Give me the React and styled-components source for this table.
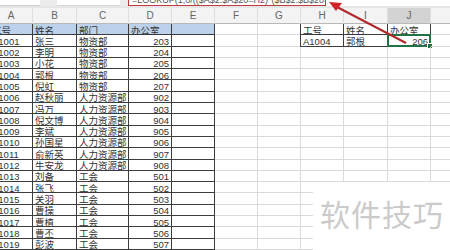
import React from "react";
import styled, { createGlobalStyle } from "styled-components";

const Global = createGlobalStyle`
  html, body {
    margin: 0;
    padding: 0;
    width: 450px;
    height: 250px;
    overflow: hidden;
    background: #ffffff;
    font-family: "Liberation Sans", "Noto Sans CJK SC", sans-serif;
  }
  * { box-sizing: border-box; }
`;

const Page = styled.div`
  position: relative;
  width: 450px;
  height: 250px;
  overflow: hidden;
  background: #fff;
`;

const TopBar = styled.div`
  display: flex;
  height: 6px;
  background: #ececec;
  overflow: hidden;
`;

const NameBox = styled.div`
  width: 40px;
  background: #fff;
  border-bottom: 1px solid #cfcfcf;
`;

const FxBox = styled.div`
  width: 63px;
  margin-left: 17px;
  background: #fff;
  border-bottom: 1px solid #d6d6d6;
`;

const FormulaBox = styled.div`
  width: 198px;
  margin-left: 8px;
  background: #fff;
  border: 1px solid #c4383c;
  border-top: none;
  overflow: hidden;
  font-size: 9px;
  line-height: 10px;
  color: #555;
  white-space: nowrap;
  padding-left: 3px;
`;

const FormulaText = styled.div`
  margin-top: -5px;
`;

const FormulaRest = styled.div`
  flex: 1;
  background: #fff;
`;

const Gap = styled.div`
  height: 2px;
  background: #e6e6e6;
`;

const Sheet = styled.div`
  display: grid;
  grid-template-columns: 43px 44px 52px 43px 43px 43px 43px 43px 44px 43px 60px;
  grid-template-rows: 16px;
  grid-auto-rows: 11.3px;
  margin-left: -10px;
  width: 501px;
`;

const ColHead = styled.div`
  display: flex;
  align-items: flex-start;
  justify-content: center;
  padding-top: 2px;
  font-size: 10px;
  line-height: 11px;
  color: #666;
  background: ${(p) => (p.$active ? "#d3d3d3" : "#f3f3f3")};
  border-right: 1px solid #dedede;
  border-bottom: 1px solid #b8b8b8;
`;

const Cell = styled.div`
  position: relative;
  font-size: 9.5px;
  line-height: 11px;
  padding: 0.5px 2px 0;
  color: #333;
  white-space: nowrap;
  text-align: ${(p) => (p.$right ? "right" : "left")};
  background: ${(p) => (p.$head ? "#bcd2ea" : "transparent")};
  border-right: 1px solid ${(p) => (p.$table ? "#3c3c3c" : "#dadada")};
  border-bottom: 1px solid ${(p) => (p.$table ? "#3c3c3c" : "#dadada")};
  border-left: ${(p) => (p.$edge ? "1px solid #3c3c3c" : "none")};
  margin-left: ${(p) => (p.$edge ? "-1px" : "0")};
`;

const Selection = styled.div`
  position: absolute;
  left: -1px;
  top: -1px;
  right: -1px;
  bottom: -1px;
  border: 2px solid #217346;
  pointer-events: none;
  &::after {
    content: "";
    position: absolute;
    right: -4px;
    bottom: -4px;
    width: 4px;
    height: 4px;
    background: #217346;
    border: 1px solid #fff;
  }
`;

const Watermark = styled.div`
  position: absolute;
  left: 313px;
  top: 182px;
  right: 0;
  bottom: 0;
  background: #fff;
  display: flex;
  align-items: flex-start;
  padding: 14px 0 0 7px;
  font-family: "Noto Sans CJK SC", sans-serif;
  font-size: 30px;
  line-height: 34px;
  letter-spacing: 1px;
  color: #cbcbcb;
`;

const Arrow = styled.svg`
  position: absolute;
  left: 0;
  top: 0;
  pointer-events: none;
`;

const cols = ["A", "B", "C", "D", "E", "F", "G", "H", "I", "J", "K"];

const rows = [
  ["张三", "物资部", 203],
  ["李明", "物资部", 204],
  ["小花", "物资部", 205],
  ["郭根", "物资部", 206],
  ["倪虹", "物资部", 207],
  ["赵秋丽", "人力资源部", 902],
  ["冯万", "人力资源部", 903],
  ["倪文博", "人力资源部", 904],
  ["李斌", "人力资源部", 905],
  ["孙国星", "人力资源部", 906],
  ["俞新英", "人力资源部", 907],
  ["牛安龙", "人力资源部", 908],
  ["刘备", "工会", 501],
  ["张飞", "工会", 502],
  ["关羽", "工会", 503],
  ["曹操", "工会", 504],
  ["曹植", "工会", 505],
  ["曹丕", "工会", 506],
  ["彭波", "工会", 507],
];

const lookup = [
  ["工号", "姓名", "办公室"],
  ["A1004", "郭根", "206"],
];

function renderRow(r) {
  const head = r === 0;
  const d = head ? ["工号", "姓名", "部门", "办公室"] : ["A" + (1000 + r), ...rows[r - 1]];
  const cells = [];
  d.forEach((v, i) => {
    cells.push(
      <Cell key={`${r}-${i}`} $table $head={head} $right={!head && i === 3}>
        {v}
      </Cell>
    );
  });
  cells.push(<Cell key={`${r}-4`} $table $head={head} />);
  cells.push(<Cell key={`${r}-5`} />);
  cells.push(<Cell key={`${r}-6`} />);
  for (let i = 0; i < 3; i++) {
    if (r < 2) {
      cells.push(
        <Cell key={`${r}-l${i}`} $table $edge={i === 0} $right={r === 1 && i === 2}>
          {lookup[r][i]}
          {r === 1 && i === 2 && <Selection />}
        </Cell>
      );
    } else {
      cells.push(<Cell key={`${r}-l${i}`} />);
    }
  }
  cells.push(<Cell key={`${r}-k`} />);
  return cells;
}

export default function App() {
  return (
    <Page>
      <Global />
      <TopBar>
        <NameBox />
        <FxBox />
        <FormulaBox>
          <FormulaText>=LOOKUP(1,0/(($A$2:$A$20=H2)*($B$2:$B$20=I2)),$D$2:$D$20)</FormulaText>
        </FormulaBox>
        <FormulaRest />
      </TopBar>
      <Gap />
      <Sheet>
        {cols.map((c) => (
          <ColHead key={c} $active={c === "J"}>{c}</ColHead>
        ))}
        {Array.from({ length: 20 }, (_, r) => renderRow(r))}
      </Sheet>
      <Watermark>软件技巧</Watermark>
      <Arrow width="450" height="60" viewBox="0 0 450 60">
        <line x1="406" y1="43" x2="337" y2="7" stroke="#b0282c" strokeWidth="2" />
        <polygon points="329,2 342,3 336,11" fill="#d0242a" />
      </Arrow>
    </Page>
  );
}
